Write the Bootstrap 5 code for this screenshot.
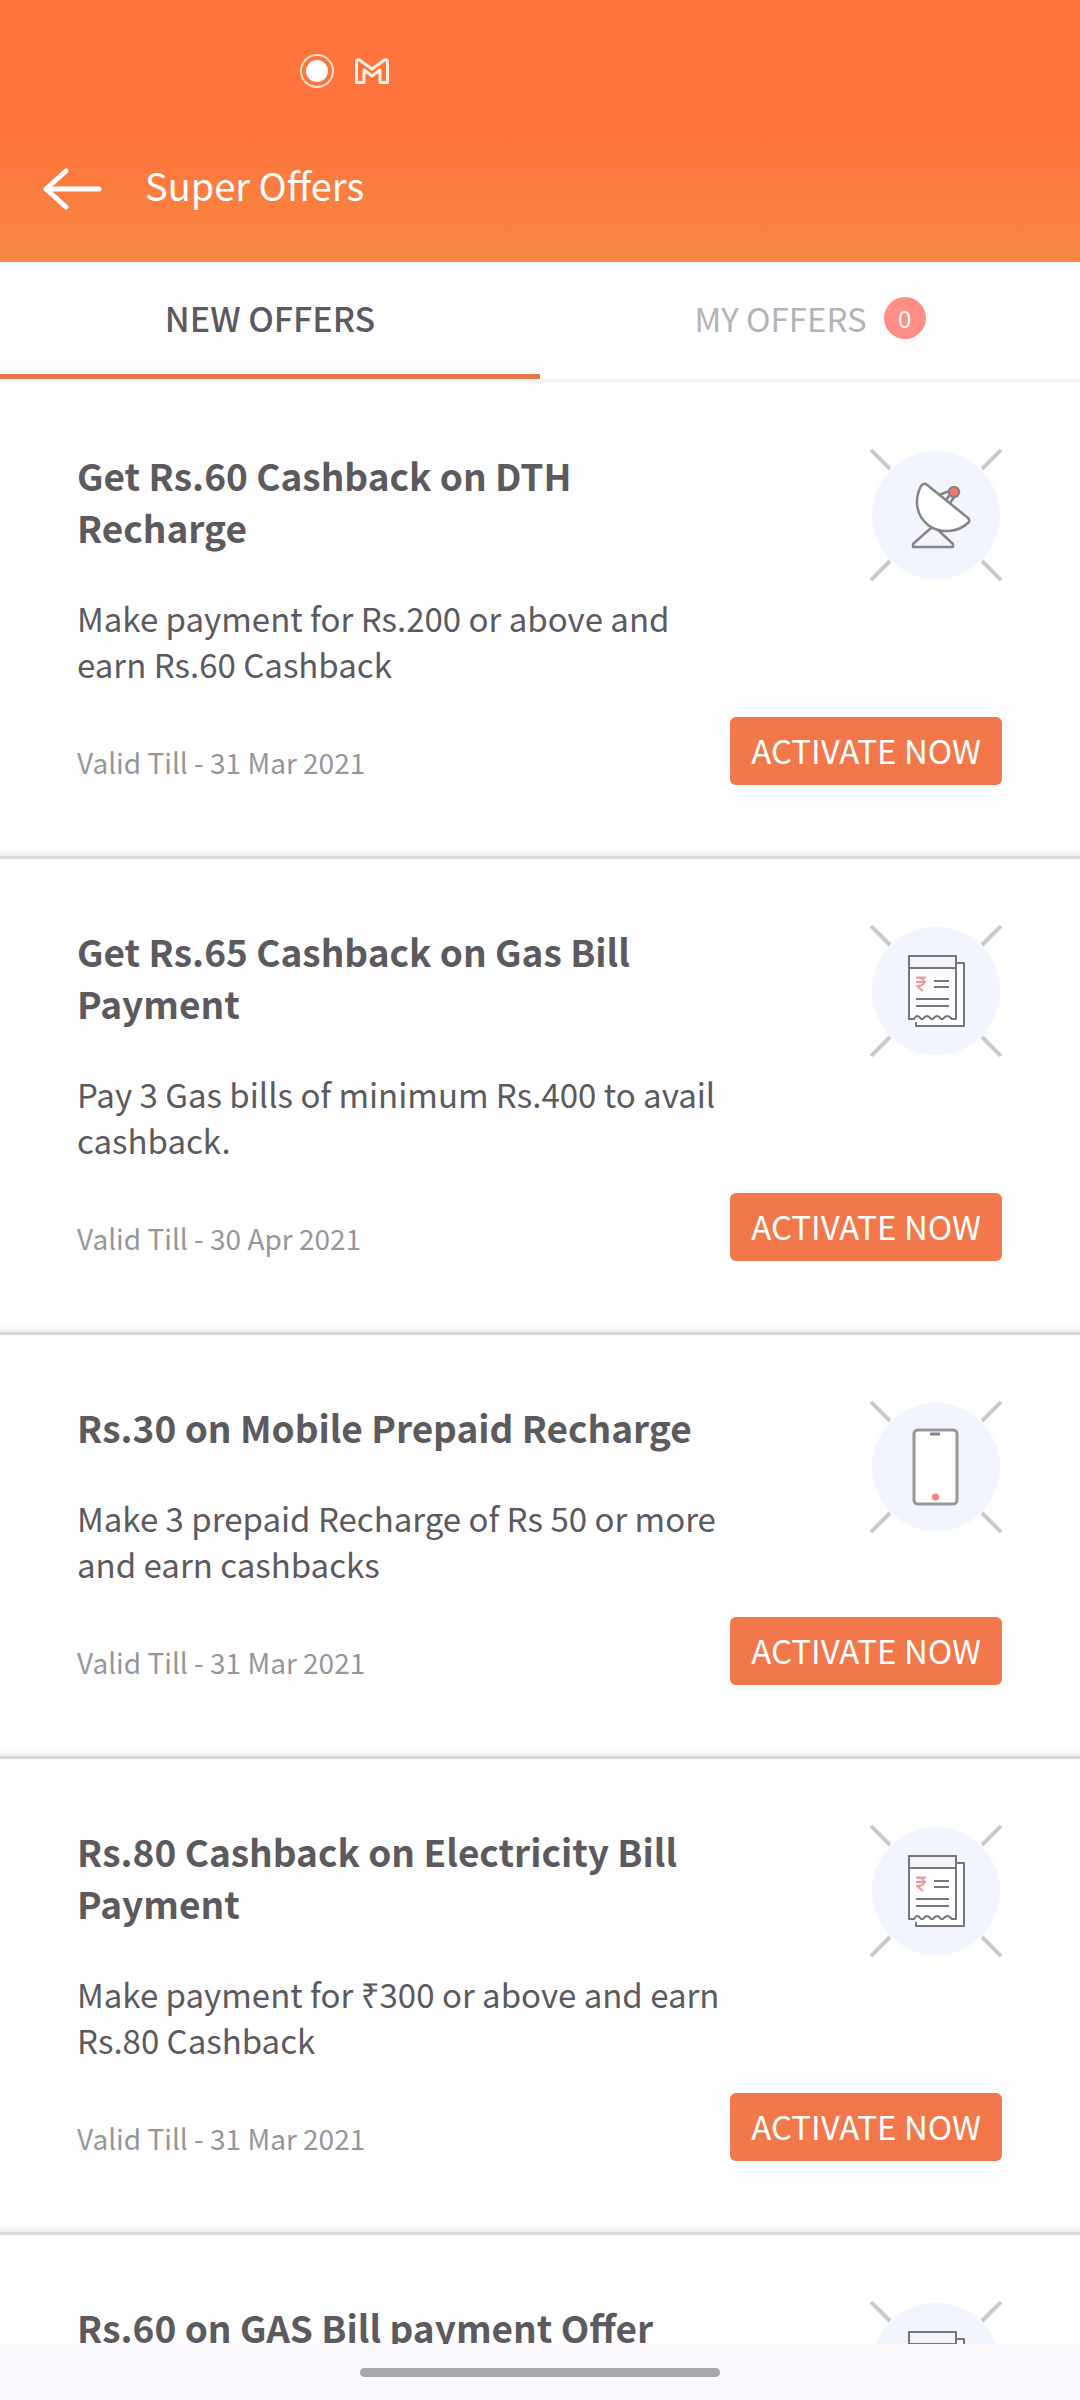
<!DOCTYPE html>
<html lang="en">
<head>
<meta charset="utf-8">
<meta name="viewport" content="width=device-width, initial-scale=1">
<title>Super Offers</title>
<link rel="stylesheet" href="https://cdn.jsdelivr.net/npm/bootstrap@5.3.0/dist/css/bootstrap.min.css">
<style>
body{font-family:"Noto Sans CJK SC","Noto Sans",sans-serif;background:#fefefe;color:#5c5a5e;font-size:33px;line-height:46px}
.app-header{background:linear-gradient(#ff743c 50%,#f68842)}
.status-strip{height:142px;padding-left:300px;gap:21px}
.title-bar{height:120px;padding:0 40px 26px;gap:41px}
.title-bar h1{font-size:38px;line-height:52px;font-weight:400;padding-bottom:8px}
.offer-tabs{border-bottom:4px solid #f4f4f8}
.offer-tabs .nav-link{height:117px;border-radius:0;border-bottom:5px solid transparent;color:#b4b3b6;font-size:33px;background:none;padding:0;gap:17px}
.offer-tabs .nav-link.active{color:#5c5a5e;font-size:34px;font-weight:500;background:none;border-bottom-color:#e4784a}
.count-badge{width:42px;height:42px;background:#ff8f86;font-size:24px;font-weight:400;padding:0}
.offer{padding:66px 78px 71px 77px;border-bottom:3px solid #d9d7db;background:linear-gradient(#fefefe,#efedf1) bottom/100% 6px no-repeat}
.offer h2{font-size:37px;line-height:52px;font-weight:700;margin:0 0 42px}
.offer-head{gap:136px;margin-bottom:30px}
.offer-icon{width:132px;height:132px}
.valid{font-size:28px;color:#98969a}
.btn-activate{height:68px;background:#f2784b;color:#fff;font-size:33px;line-height:46px;padding:0 21px 2px;border:0;border-radius:6px}
.btn-activate:hover{background:#e06a3e;color:#fff}
.gesture-bar{height:56px;background:#faf8fc}
.gesture-bar span{width:33.4%;height:9px;background:#a8a7aa}
</style>
</head>
<body>
<svg class="d-none" aria-hidden="true">
<symbol id="rays" viewBox="0 0 132 132">
<circle cx="66" cy="66" r="64" fill="#f2f5fe"/>
<path d="M1 1 20 20M131 1 112 20M1 131 20 112M131 131 112 112" stroke="#c9c8cb" stroke-width="4"/>
</symbol>
<symbol id="dish" viewBox="0 0 132 132">
<use href="#rays"/>
<g stroke="#858489" stroke-width="2.5" stroke-linejoin="round" stroke-linecap="round">
<path d="M61 79 43 95V98H83V95L66 79Z" fill="#f5f5f9"/>
<path d="M69 46 82 41M80 54 85 47M75 53 80 45" fill="none"/>
<path d="M56 35Q53 34 51 37C44 51 46 66 58 76C70 85 88 84 99 73Q100 71 98 69Z" fill="#fff"/>
<circle cx="84" cy="43" r="5" fill="#fb7468"/>
</g>
</symbol>
<symbol id="bill" viewBox="0 0 132 132">
<use href="#rays"/>
<g fill="none" stroke="#77767b" stroke-width="2" stroke-linejoin="round">
<path d="M46 97V101H94V38H87" fill="#fdfcfe"/>
<path d="M39 31H86V94H82Q77 88 73 94H71Q67 88 63 94H61Q57 88 53 94H51Q47 88 44 94H39Z" fill="#fdfcfe"/>
<path d="M39 31H86V43H39Z" fill="#f4f5fa"/>
<path d="M64 56H79M64 62H79M46 74H79M46 81H79"/>
<path d="M46 52.500H56M46 57H56M47 52.500Q54 53 54 57T47 61L53 66" stroke="#ef9a99"/>
</g>
</symbol>
<symbol id="phone" viewBox="0 0 132 132">
<use href="#rays"/>
<rect x="44" y="29" width="43" height="74" rx="4" fill="#fdfdfe" stroke="#98979b" stroke-width="3"/>
<path d="M60 33H70" stroke="#858489" stroke-width="3"/>
<circle cx="65.500" cy="96" r="3.500" fill="#f68079"/>
</symbol>
</svg>
<div class="vh-100 d-flex flex-column overflow-hidden">
<header class="app-header text-white flex-shrink-0">
<div class="status-strip d-flex align-items-center">
<svg width="34" height="34" viewBox="0 0 34 34"><circle cx="17" cy="17" r="16" fill="none" stroke="#ffe0cf" stroke-width="2"/><circle cx="17" cy="17" r="11" fill="#fff"/></svg>
<svg width="34" height="26" viewBox="0 0 34 26"><path d="M1.500 4Q1.500 1 4.500 2L17 11 29.500 2Q32.500 1 32.500 4V24.500H25V12L17 18 9 12V24.500H1.500Z" fill="none" stroke="#fff1ea" stroke-width="3" stroke-linejoin="round"/></svg>
</div>
<div class="title-bar d-flex align-items-center">
<a href="#" class="d-flex text-white" aria-label="Back"><svg width="64" height="48" viewBox="0 0 64 48" fill="none" stroke="currentColor" stroke-width="5" stroke-linecap="round" stroke-linejoin="round"><path d="M59 24H6M26 6 6 24 26 42"/></svg></a>
<h1 class="m-0">Super Offers</h1>
</div>
</header>
<ul class="offer-tabs nav nav-pills nav-justified flex-shrink-0" role="tablist">
<li class="nav-item" role="presentation"><button type="button" role="tab" aria-selected="true" class="nav-link active d-flex align-items-center justify-content-center w-100">NEW OFFERS</button></li>
<li class="nav-item" role="presentation"><button type="button" role="tab" aria-selected="false" class="nav-link d-flex align-items-center justify-content-center w-100">MY OFFERS <span class="count-badge badge rounded-circle d-flex align-items-center justify-content-center">0</span></button></li>
</ul>
<main class="flex-grow-1 overflow-hidden">
<article class="offer">
<div class="offer-head d-flex align-items-start">
<div class="flex-grow-1"><h2>Get Rs.60 Cashback on DTH Recharge</h2><p class="m-0">Make payment for Rs.200 or above and earn Rs.60 Cashback</p></div>
<svg class="offer-icon flex-shrink-0"><use href="#dish"/></svg>
</div>
<div class="d-flex justify-content-between align-items-end"><span class="valid">Valid Till - 31 Mar 2021</span><button type="button" class="btn btn-activate">ACTIVATE NOW</button></div>
</article>
<article class="offer">
<div class="offer-head d-flex align-items-start">
<div class="flex-grow-1"><h2>Get Rs.65 Cashback on Gas Bill Payment</h2><p class="m-0">Pay 3 Gas bills of minimum Rs.400 to avail cashback.</p></div>
<svg class="offer-icon flex-shrink-0"><use href="#bill"/></svg>
</div>
<div class="d-flex justify-content-between align-items-end"><span class="valid">Valid Till - 30 Apr 2021</span><button type="button" class="btn btn-activate">ACTIVATE NOW</button></div>
</article>
<article class="offer">
<div class="offer-head d-flex align-items-start">
<div class="flex-grow-1"><h2>Rs.30 on Mobile Prepaid Recharge</h2><p class="m-0">Make 3 prepaid Recharge of Rs 50 or more and earn cashbacks</p></div>
<svg class="offer-icon flex-shrink-0"><use href="#phone"/></svg>
</div>
<div class="d-flex justify-content-between align-items-end"><span class="valid">Valid Till - 31 Mar 2021</span><button type="button" class="btn btn-activate">ACTIVATE NOW</button></div>
</article>
<article class="offer">
<div class="offer-head d-flex align-items-start">
<div class="flex-grow-1"><h2>Rs.80 Cashback on Electricity Bill Payment</h2><p class="m-0">Make payment for ₹300 or above and earn Rs.80 Cashback</p></div>
<svg class="offer-icon flex-shrink-0"><use href="#bill"/></svg>
</div>
<div class="d-flex justify-content-between align-items-end"><span class="valid">Valid Till - 31 Mar 2021</span><button type="button" class="btn btn-activate">ACTIVATE NOW</button></div>
</article>
<article class="offer">
<div class="offer-head d-flex align-items-start">
<div class="flex-grow-1"><h2>Rs.60 on GAS Bill payment Offer</h2></div>
<svg class="offer-icon flex-shrink-0"><use href="#bill"/></svg>
</div>
</article>
</main>
<footer class="gesture-bar d-flex align-items-center justify-content-center flex-shrink-0"><span class="rounded-pill"></span></footer>
</div>
<script src="https://cdn.jsdelivr.net/npm/bootstrap@5.3.0/dist/js/bootstrap.bundle.min.js"></script>
</body>
</html>
